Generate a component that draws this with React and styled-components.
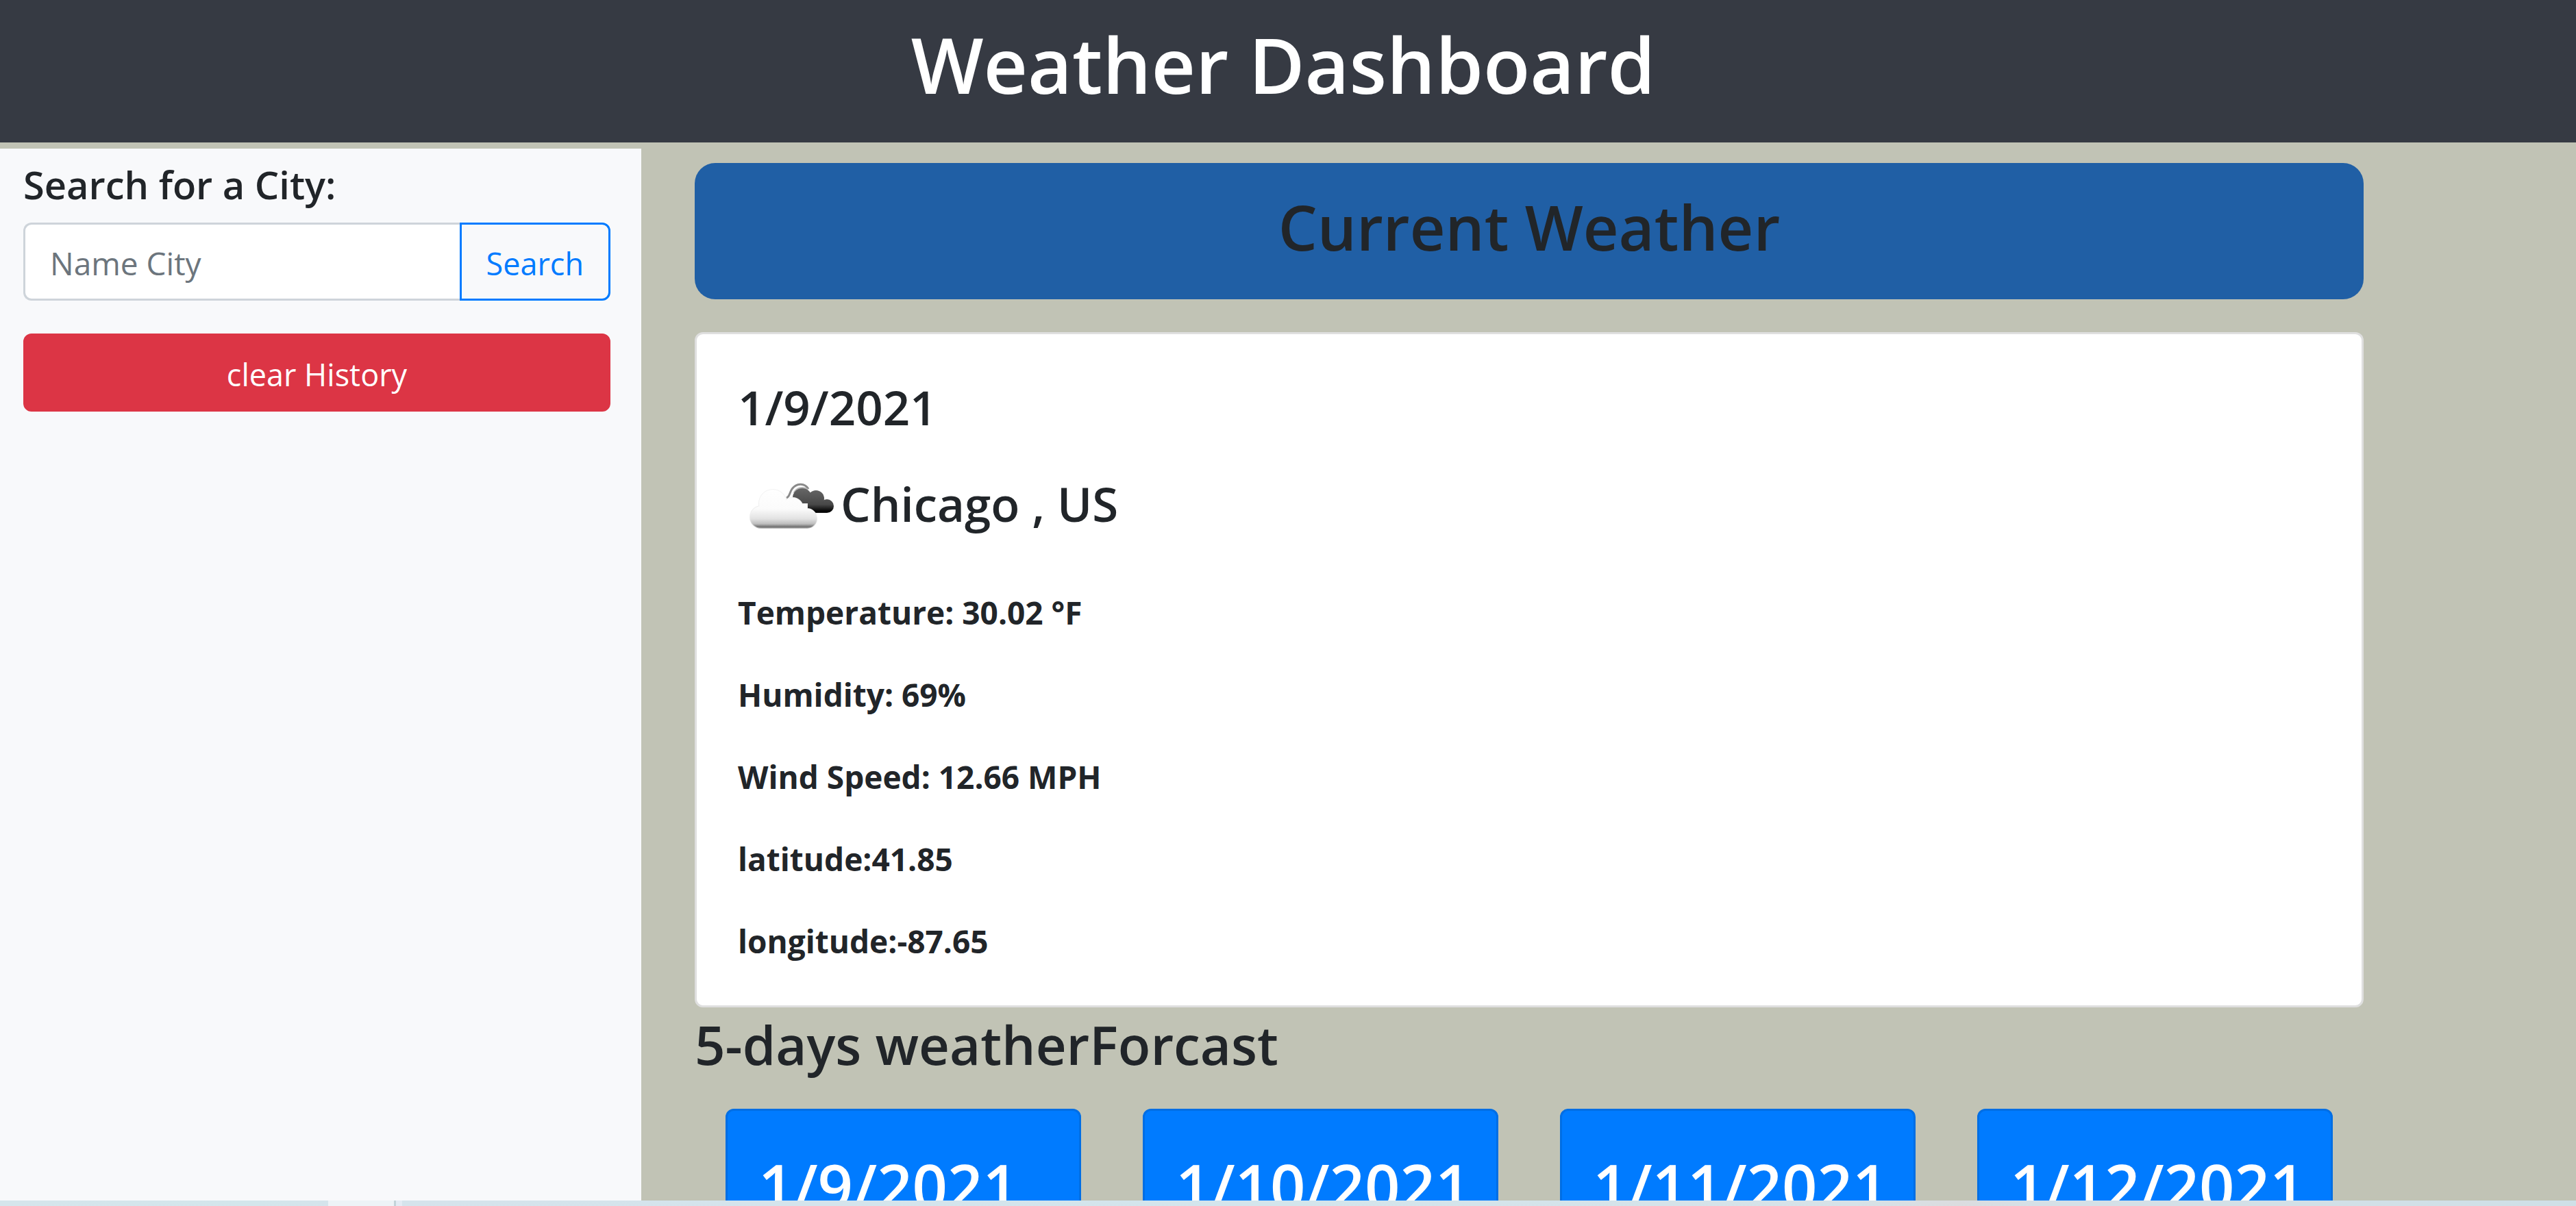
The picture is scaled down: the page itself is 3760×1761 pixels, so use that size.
import React, { useState } from "react";
import styled, { createGlobalStyle } from "styled-components";

const GlobalStyle = createGlobalStyle`
  *, *::before, *::after { box-sizing: border-box; }
  body {
    margin: 0;
    background: #c1c3b5;
    color: #212529;
    font-family: "Open Sans", "Noto Sans", sans-serif;
    font-size: 45px;
  }
  h1, h2, h3, h4, p, ul { margin: 0; padding: 0; }
`;

const Page = styled.div`
  display: flex;
  flex-direction: column;
  height: 100vh;
  overflow: hidden;
`;

const Header = styled.header`
  flex: none;
  padding: 26px 14px 46px 0;
  background: #363a43;
  color: #fff;
  text-align: center;
`;

const Title = styled.h1`
  font-size: 112px;
  font-weight: 600;
  line-height: 136px;
`;

const Body = styled.div`
  flex: 1;
  min-height: 0;
  display: grid;
  grid-template-columns: minmax(0, 1fr) minmax(0, 3fr);
  grid-template-rows: minmax(0, 1fr);
  padding-right: 16px;
  overflow: hidden;
`;

const Sidebar = styled.aside`
  margin-top: 9px;
  padding: 16px 45px 0 34px;
  background: #f8f9fb;
`;

const SearchForm = styled.form`
  display: flex;
  flex-direction: column;
  gap: 20px;
`;

const SearchLabel = styled.label`
  font-size: 56px;
  font-weight: 600;
  line-height: 72px;
`;

const InputGroup = styled.div`
  display: flex;
  height: 114px;
`;

const CityInput = styled.input`
  flex: 1;
  min-width: 0;
  padding: 4px 36px 0;
  border: 3px solid #ced4da;
  border-right: 0;
  border-radius: 12px 0 0 12px;
  background: #fff;
  color: #495057;
  font: inherit;
  font-size: 46px;
  outline: none;
  &::placeholder { color: #6c757d; opacity: 1; }
`;

const Button = styled.button`
  height: 114px;
  padding: 4px 36px 0;
  border: 3px solid ${(p) => (p.$danger ? "#dc3545" : "#007bff")};
  border-radius: ${(p) => (p.$danger ? "12px" : "0 12px 12px 0")};
  background: ${(p) => (p.$danger ? "#dc3545" : "transparent")};
  color: ${(p) => (p.$danger ? "#fff" : "#007bff")};
  font: inherit;
  cursor: pointer;
`;

const ClearButton = styled(Button)`
  width: 100%;
  margin-top: 48px;
`;

const Main = styled.main`
  padding: 30px 294px 0 78px;
`;

const Banner = styled.div`
  padding: 32px 30px 45px;
  border-radius: 30px;
  background: #205fa5;
  text-align: center;
`;

const BannerTitle = styled.h2`
  font-size: 90px;
  font-weight: 600;
  line-height: 122px;
`;

const CurrentCard = styled.section`
  display: flex;
  flex-direction: column;
  margin-top: 48px;
  padding: 60px 60px 58px;
  border: 3px solid #dfdfdf;
  border-radius: 12px;
  background: #fff;
`;

const CardHeading = styled.h4`
  font-size: 69px;
  font-weight: 600;
  line-height: 92px;
`;

const Place = styled.div`
  display: flex;
  align-items: center;
  margin: 20px 0 48px;
`;

const Metrics = styled.div`
  display: flex;
  flex-direction: column;
  gap: 48px;
  font-size: 46px;
  font-weight: 700;
  line-height: 72px;
`;

const ForecastTitle = styled.h3`
  font-size: 78px;
  font-weight: 600;
  line-height: 108px;
`;

const ForecastGrid = styled.div`
  display: grid;
  grid-template-columns: repeat(4, minmax(0, 1fr));
  gap: 90px;
  margin-top: 40px;
  padding: 0 45px;
`;

const ForecastCard = styled.article`
  height: 600px;
  padding: 48px 0 48px 45px;
  border: 3px solid #006ee4;
  border-radius: 12px;
  background: #007bff;
  color: #fff;
`;

const ForecastDate = styled.h2`
  font-size: 90px;
  font-weight: 600;
  line-height: 122px;
  white-space: nowrap;
`;

const Taskbar = styled.footer`
  flex: none;
  display: flex;
  height: 8px;
  padding-left: 479px;
  background: linear-gradient(90deg, #d5e5ec, #d3e6ec 10%, #d5e3ec 14%, #d3e5ec 50%, #d6e2e8 72%, #dbdcdf 76%, #d5e0e7 79%, #cfe0e7);
`;

const TaskbarPart = styled.span`
  width: ${(p) => p.$width}px;
  background: ${(p) => p.$color};
`;

function WhiteLobes(props) {
  return (
    <g {...props}>
      <circle cx="34" cy="95" r="16" />
      <circle cx="51" cy="75" r="20" />
      <circle cx="80" cy="82" r="15" />
      <circle cx="101" cy="97" r="14" />
      <rect x="34" y="76" width="67" height="35" />
    </g>
  );
}

function BrokenClouds() {
  return (
    <svg width="150" height="150" viewBox="0 0 150 150" aria-hidden="true">
      <defs>
        <linearGradient id="front" gradientUnits="userSpaceOnUse" x1="0" y1="54" x2="0" y2="112">
          <stop offset="0" stopColor="#fff" />
          <stop offset="0.5" stopColor="#fbfbfb" />
          <stop offset="0.75" stopColor="#e2e2e2" />
          <stop offset="0.88" stopColor="#bdbdbd" />
          <stop offset="0.95" stopColor="#727272" />
          <stop offset="1" stopColor="#aaa" />
        </linearGradient>
        <linearGradient id="edge" gradientUnits="userSpaceOnUse" x1="0" y1="54" x2="0" y2="112">
          <stop offset="0" stopColor="#f3f3f3" />
          <stop offset="0.7" stopColor="#ededed" />
          <stop offset="1" stopColor="#c4c4c4" />
        </linearGradient>
        <linearGradient id="back" gradientUnits="userSpaceOnUse" x1="0" y1="52" x2="0" y2="90">
          <stop offset="0" stopColor="#686868" />
          <stop offset="0.65" stopColor="#484848" />
          <stop offset="0.92" stopColor="#000" />
          <stop offset="1" stopColor="#333" />
        </linearGradient>
      </defs>
      <path d="M71 67C76 65 75 60 79 54C85 46 97 44 103 54" fill="none" stroke="#8a8a8a" strokeWidth="3" />
      <path d="M82 60C86 53 94 50 102 55" fill="none" stroke="#b5b5b5" strokeWidth="3" />
      <g fill="url(#back)">
        <circle cx="94" cy="67" r="14" />
        <circle cx="114" cy="68" r="12" />
        <circle cx="130" cy="79" r="10" />
        <path d="M84 66H124L130 89H100Z" />
      </g>
      <WhiteLobes fill="url(#edge)" stroke="url(#edge)" strokeWidth="2" />
      <WhiteLobes fill="url(#front)" />
    </svg>
  );
}

const METRICS = [
  "Temperature: 30.02 °F",
  "Humidity: 69%",
  "Wind Speed: 12.66 MPH",
  "latitude:41.85",
  "longitude:-87.65",
];

const FORECAST = ["1/9/2021", "1/10/2021", "1/11/2021", "1/12/2021"];

export default function App() {
  const [city, setCity] = useState("");
  return (
    <Page>
      <GlobalStyle />
      <Header>
        <Title>Weather Dashboard</Title>
      </Header>
      <Body>
        <Sidebar>
          <SearchForm onSubmit={(e) => e.preventDefault()}>
            <SearchLabel htmlFor="city">Search for a City:</SearchLabel>
            <InputGroup>
              <CityInput
                id="city"
                type="text"
                placeholder="Name City"
                value={city}
                onChange={(e) => setCity(e.target.value)}
              />
              <Button type="submit">Search</Button>
            </InputGroup>
          </SearchForm>
          <ClearButton type="button" $danger onClick={() => setCity("")}>
            clear History
          </ClearButton>
        </Sidebar>
        <Main>
          <Banner>
            <BannerTitle>Current Weather</BannerTitle>
          </Banner>
          <CurrentCard>
            <CardHeading>1/9/2021</CardHeading>
            <Place>
              <BrokenClouds />
              <CardHeading>Chicago , US</CardHeading>
            </Place>
            <Metrics>
              {METRICS.map((line) => (
                <p key={line}>{line}</p>
              ))}
            </Metrics>
          </CurrentCard>
          <ForecastTitle>5-days weatherForcast</ForecastTitle>
          <ForecastGrid>
            {FORECAST.map((date) => (
              <ForecastCard key={date}>
                <ForecastDate>{date}</ForecastDate>
              </ForecastCard>
            ))}
          </ForecastGrid>
        </Main>
      </Body>
      <Taskbar>
        <TaskbarPart $width={96} $color="#edf3f7" />
        <TaskbarPart $width={3} $color="#c3d3d9" />
        <TaskbarPart $width={9} $color="#e3ebf4" />
      </Taskbar>
    </Page>
  );
}
